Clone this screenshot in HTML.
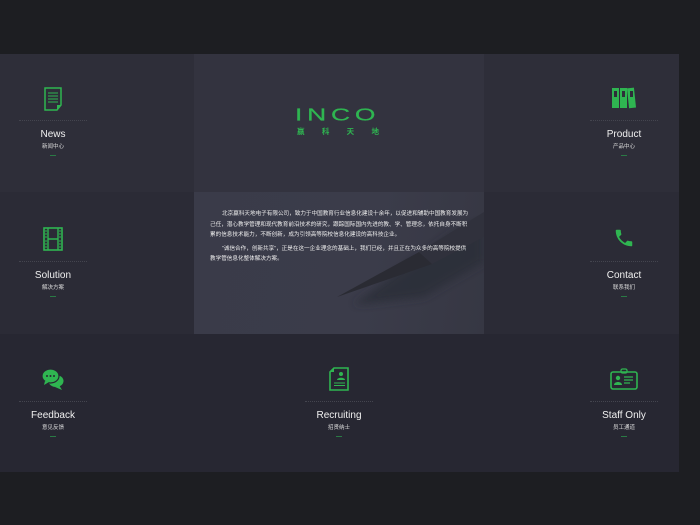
<!DOCTYPE html>
<html><head><meta charset="utf-8"><style>
body{margin:0;width:700px;height:525px;background:#1d1e22;position:relative;overflow:hidden;font-family:"Liberation Sans","Noto Sans CJK SC",sans-serif}
.c{position:absolute}
.cell{position:absolute;text-align:center;color:#eee}
.ic{position:absolute;left:50%;transform:translateX(-50%)}
.ln{position:absolute;left:50%;margin-left:-34px;width:68px;border-top:1px dotted #44454f}
.t{position:absolute;left:0;right:0;font-size:10px;color:#f0f0f0}
.s{position:absolute;left:0;right:0;font-size:5.5px;color:#ddd}
.d{position:absolute;left:50%;margin-left:-3px;width:6px;height:1px;background:#2a7a45}
</style></head><body>
<div class="c" style="left:0;top:54px;width:194px;height:138px;background:#2e2e39"></div>
<div class="c" style="left:194px;top:54px;width:290px;height:138px;background:#33333f"></div>
<div class="c" style="left:484px;top:54px;width:195px;height:138px;background:#2e2e39"></div>
<div class="c" style="left:0;top:192px;width:194px;height:142px;background:#2b2b36"></div>
<div class="c" style="left:194px;top:192px;width:290px;height:142px;background:linear-gradient(100deg,#3a3b49 0%,#3b3c4a 60%,#363743 100%)"></div>
<div class="c" style="left:484px;top:192px;width:195px;height:142px;background:#2b2b36"></div>
<div class="c" style="left:0;top:334px;width:194px;height:138px;background:#272732"></div>
<div class="c" style="left:194px;top:334px;width:290px;height:138px;background:#272732"></div>
<div class="c" style="left:484px;top:334px;width:195px;height:138px;background:#272732"></div>

<!-- pencil shading -->
<svg class="c" style="left:194px;top:192px" width="290" height="142"><defs><filter id="b"><feGaussianBlur stdDeviation="4"/></filter></defs><path d="M160 112 L260 40 L290 30 L290 70 L230 105 L170 112 Z" fill="#2c2d37" opacity=".8" filter="url(#b)"/><path d="M143 105 L225 60 L238 72 Z" fill="#2a2b33"/><path d="M225 60 L290 20 L290 45 L238 72Z" fill="#30313c"/></svg>

<!-- logo -->
<div class="c" style="left:295px;top:106px;font-size:22px;line-height:22px;color:#2fb551;letter-spacing:4px;-webkit-text-stroke:0.3px #2fb551;transform:scale(1.2,.8);transform-origin:left top">INCO</div>
<div class="c" style="left:297px;top:126px;width:82px;display:flex;justify-content:space-between;font-size:7.5px;font-weight:bold;color:#2fb551"><span>赢</span><span>科</span><span>天</span><span>地</span></div>

<!-- paragraph -->
<div class="c" style="left:210px;top:209px;width:260px;font-size:5.6px;line-height:10.5px;color:#eee">
<p style="margin:0 0 3px;text-indent:12px">北京赢科天地电子有限公司，致力于中国教育行业信息化建设十余年，以促进和辅助中国教育发展为己任，潜心教学管理和现代教育前沿技术的研究，跟踪国际国内先进的教、学、管理念，依托自身不断积累的信息技术能力，不断创新，成为引领高等院校信息化建设的高科技企业。</p>
<p style="margin:0;text-indent:12px">“诚信合作，创新共享”，正是在这一企业理念的基础上，我们已经，并且正在为众多的高等院校提供教学管信息化整体解决方案。</p></div>

<!-- cells -->
<div class="cell" style="left:0;top:54px;width:106px;height:138px">
<svg class="ic" style="top:33px" width="20" height="24"><path d="M2 1h16v17l-4 5H2z" fill="none" stroke="#2fb551" stroke-width="1.5"/><path d="M5 6h10M5 9h10M5 12h10M5 15h10" stroke="#2fb551"/><path d="M14 23v-5h4z" fill="#2fb551"/></svg>
<div class="ln" style="top:66px"></div><div class="t" style="top:75px">News</div><div class="s" style="top:88px">新闻中心</div><div class="d" style="top:101px"></div></div>

<div class="cell" style="left:571px;top:54px;width:106px;height:138px">
<svg class="ic" style="top:33px" width="26" height="22"><g fill="#2fb551"><rect x="1" y="1" width="7" height="20"/><rect x="9" y="1" width="7" height="20"/><rect x="17" y="1" width="7" height="20" transform="rotate(-6 20 11)"/></g><g fill="#2e2e39"><rect x="3" y="4" width="3" height="6"/><rect x="11" y="4" width="3" height="6"/><rect x="19" y="4" width="3" height="6"/></g></svg>
<div class="ln" style="top:66px"></div><div class="t" style="top:75px">Product</div><div class="s" style="top:88px">产品中心</div><div class="d" style="top:101px"></div></div>

<div class="cell" style="left:0;top:192px;width:106px;height:142px">
<svg class="ic" style="top:35px" width="20" height="24"><rect x="1" y="1" width="18" height="22" fill="none" stroke="#2fb551" stroke-width="1.6"/><path d="M5 1v22M15 1v22M5 12h10" stroke="#2fb551" stroke-width="1.4"/><path d="M2 4h2M2 7h2M2 10h2M2 14h2M2 17h2M2 20h2M16 4h2M16 7h2M16 10h2M16 14h2M16 17h2M16 20h2" stroke="#2fb551"/></svg>
<div class="ln" style="top:69px"></div><div class="t" style="top:78px">Solution</div><div class="s" style="top:91px">解决方案</div><div class="d" style="top:104px"></div></div>

<div class="cell" style="left:571px;top:192px;width:106px;height:142px">
<svg class="ic" style="top:35px" width="22" height="22" viewBox="0 0 24 24"><path d="M6.6 10.8c1.4 2.8 3.8 5.1 6.6 6.6l2.2-2.2c.3-.3.7-.4 1-.2 1.1.4 2.3.6 3.6.6.6 0 1 .4 1 1V20c0 .6-.4 1-1 1C10.6 21 3 13.4 3 4c0-.6.4-1 1-1h3.5c.6 0 1 .4 1 1 0 1.3.2 2.5.6 3.6.1.3 0 .7-.2 1z" fill="#2fb551"/></svg>
<div class="ln" style="top:69px"></div><div class="t" style="top:78px">Contact</div><div class="s" style="top:91px">联系我们</div><div class="d" style="top:104px"></div></div>

<div class="cell" style="left:0;top:334px;width:106px;height:138px">
<svg class="ic" style="top:33px" width="24" height="24"><ellipse cx="15" cy="14" rx="7.5" ry="6" fill="#2fb551"/><path d="M18 18l3 5-7-3z" fill="#2fb551"/><ellipse cx="9.5" cy="9" rx="8.5" ry="7" fill="#2fb551" stroke="#272732" stroke-width="1.2"/><path d="M4 14l-1 4 5-3z" fill="#2fb551"/><circle cx="6" cy="9" r="1" fill="#272732"/><circle cx="9.5" cy="9" r="1" fill="#272732"/><circle cx="13" cy="9" r="1" fill="#272732"/></svg>
<div class="ln" style="top:67px"></div><div class="t" style="top:76px">Feedback</div><div class="s" style="top:89px">意见反馈</div><div class="d" style="top:102px"></div></div>

<div class="cell" style="left:286px;top:334px;width:106px;height:138px">
<svg class="ic" style="top:33px" width="20" height="24"><path d="M5 1h14v22H1V5z" fill="none" stroke="#2fb551" stroke-width="1.6"/><path d="M1 5h4V1z" fill="#2fb551"/><circle cx="12" cy="7" r="2" fill="#2fb551"/><path d="M8 13c0-3 8-3 8 0z" fill="#2fb551"/><path d="M5 16h11M5 18.5h11" stroke="#2fb551"/></svg>
<div class="ln" style="top:67px"></div><div class="t" style="top:76px">Recruiting</div><div class="s" style="top:89px">招贤纳士</div><div class="d" style="top:102px"></div></div>

<div class="cell" style="left:571px;top:334px;width:106px;height:138px">
<svg class="ic" style="top:34px" width="28" height="22"><rect x="1" y="4" width="26" height="17" rx="2" fill="none" stroke="#2fb551" stroke-width="1.6"/><rect x="11" y="1" width="6" height="4" rx="1.5" fill="none" stroke="#2fb551" stroke-width="1.3"/><circle cx="8" cy="10" r="2.2" fill="#2fb551"/><path d="M4 17c0-4 8-4 8 0z" fill="#2fb551"/><path d="M14 9h9M14 12h9M14 15h6" stroke="#2fb551" stroke-width="1.3"/></svg>
<div class="ln" style="top:67px"></div><div class="t" style="top:76px">Staff Only</div><div class="s" style="top:89px">员工通道</div><div class="d" style="top:102px"></div></div>
</body></html>
